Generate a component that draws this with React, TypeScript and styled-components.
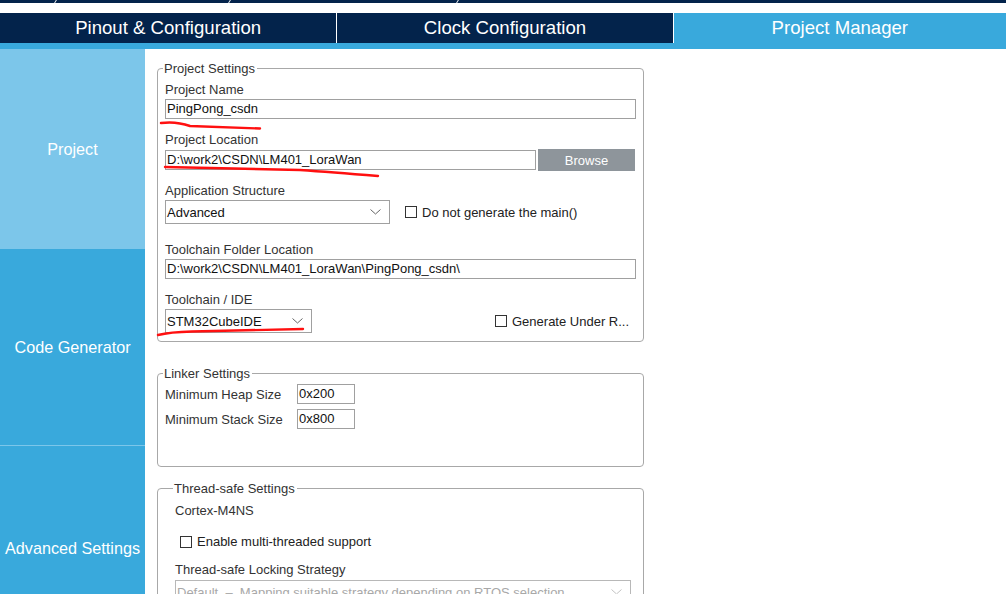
import styled, { createGlobalStyle } from 'styled-components';

const GlobalStyle = createGlobalStyle`
  html, body {
    margin: 0;
    padding: 0;
    background: #ffffff;
    overflow: hidden;
  }
  body {
    font-family: "Liberation Sans", Arial, sans-serif;
    color: #222;
  }
`;

const NAVY = '#03234b';
const BLUE = '#39a9dc';
const LIGHT = '#7cc6ea';

// 页面
const Page = styled.div`
  position: relative;
  width: 1006px;
  height: 594px;
  display: flex;
  flex-direction: column;
  overflow: hidden;
`;

// 顶部面包屑残留
const TopStrip = styled.div`
  flex-shrink: 0;
  height: 3px;
  background: ${NAVY};
  display: flex;
  padding-left: 55px;
`;

const Slash = styled.span<{ $w: number }>`
  width: ${p => p.$w}px;
  height: 3px;
  border-left: 1px solid #fff;
  transform: skewX(-30deg);
`;

// 标签栏
const TabBar = styled.div`
  flex-shrink: 0;
  margin-top: 10px;
  display: flex;
  height: 30px;
  background: ${NAVY};
`;

const Tab = styled.div<{ $active?: boolean; $w: number }>`
  width: ${p => p.$w}px;
  height: 30px;
  background: ${p => (p.$active ? BLUE : NAVY)};
  border-left: 1px solid #ffffff;
  color: #fff;
  font-size: 18.6px;
  display: flex;
  align-items: center;
  justify-content: center;
  line-height: 30px;
  &:first-child {
    border-left: none;
  }
`;

const TabStripe = styled.div`
  flex-shrink: 0;
  height: 6px;
  background: ${BLUE};
`;

const Body = styled.div`
  flex: 1;
  min-height: 0;
  display: flex;
`;

// 左侧导航
const Sidebar = styled.div`
  width: 145px;
  flex-shrink: 0;
  display: flex;
  flex-direction: column;
  background: ${BLUE};
`;

const SideItem = styled.div<{ $active?: boolean; $h: number; $line?: boolean }>`
  flex-shrink: 0;
  height: ${p => p.$h}px;
  background: ${p => (p.$active ? LIGHT : BLUE)};
  border-bottom: ${p => (p.$line ? `1px solid ${LIGHT}` : 'none')};
  color: #fff;
  font-size: 16.2px;
  display: flex;
  align-items: center;
  justify-content: center;
  white-space: nowrap;
`;

const Content = styled.div`
  padding: 12px 0 0 12px;
  display: flex;
  flex-direction: column;
`;

// 分组框
const Group = styled.fieldset<{ $gap?: number; $h?: number; $pl?: number }>`
  flex-shrink: 0;
  width: 487px;
  box-sizing: border-box;
  margin: ${p => p.$gap ?? 0}px 0 0 0;
  padding: 6px 8px 8px ${p => p.$pl ?? 7}px;
  border: 1px solid #a8a8a8;
  border-radius: 4px;
  min-width: 0;
  ${p => (p.$h ? `height: ${p.$h}px;` : '')}
`;

const Legend = styled.legend`
  font-size: 13px;
  line-height: 15px;
  color: #333;
  padding: 0 2px 0 1px;
  margin-left: -2px;
`;

const Label = styled.div<{ $top?: number }>`
  font-size: 13px;
  line-height: 15px;
  color: #333;
  margin-top: ${p => p.$top ?? 0}px;
  margin-bottom: 2px;
  white-space: nowrap;
`;

const Row = styled.div`
  display: flex;
  align-items: center;
`;

const TextInput = styled.div<{ $w: number }>`
  width: ${p => p.$w}px;
  height: 20px;
  box-sizing: border-box;
  border: 1px solid #a0a0a0;
  font-size: 13px;
  line-height: 18px;
  padding-left: 1px;
  color: #111;
  white-space: nowrap;
  overflow: hidden;
`;

const Browse = styled.div`
  margin-left: 2px;
  width: 97px;
  height: 22px;
  background: #8e959b;
  color: #fff;
  font-size: 13px;
  display: flex;
  align-items: center;
  justify-content: center;
`;

const Select = styled.div<{ $w: number; $disabled?: boolean }>`
  width: ${p => p.$w}px;
  height: 24px;
  box-sizing: border-box;
  border: 1px solid ${p => (p.$disabled ? '#b8b8b8' : '#a0a0a0')};
  font-size: 13px;
  color: ${p => (p.$disabled ? '#a8a8a8' : '#111')};
  display: flex;
  align-items: center;
  justify-content: space-between;
  padding: 0 8px 0 1px;
  white-space: pre;
  overflow: hidden;
`;

const Check = styled.label<{ $ml?: number; $mt?: number }>`
  margin-left: ${p => p.$ml ?? 0}px;
  margin-top: ${p => p.$mt ?? 0}px;
  display: flex;
  align-items: center;
  gap: 5px;
  font-size: 13px;
  color: #222;
  white-space: nowrap;
`;

const Box = styled.span`
  width: 12px;
  height: 12px;
  box-sizing: border-box;
  border: 1px solid #333;
  background: #fff;
`;

const Grid = styled.div`
  display: grid;
  grid-template-columns: 132px 58px;
  row-gap: 5px;
  align-items: center;
  margin-top: -3px;
`;

const Plain = styled.div<{ $top?: number }>`
  font-size: 13px;
  line-height: 15px;
  color: #333;
  margin-top: ${p => p.$top ?? 0}px;
  white-space: nowrap;
`;

const SelectWrap = styled.div`
  margin-top: 3px;
`;

// 红色手绘下划线（批注覆盖层）
const Marks = styled.svg`
  position: absolute;
  left: 0;
  top: 0;
  pointer-events: none;
`;

const Chevron = ({ light }: { light?: boolean }) => (
  <svg width="11" height="6" viewBox="0 0 11 6">
    <path d="M0.5 0.5 L5.5 5 L10.5 0.5" fill="none" stroke={light ? '#c4c4c4' : '#666'} strokeWidth="1" />
  </svg>
);

export default function App() {
  return (
    <Page>
      <GlobalStyle />
      <TopStrip>
        <Slash $w={173} />
        <Slash $w={227} />
        <Slash $w={10} />
      </TopStrip>

      <TabBar>
        <Tab $w={337}>Pinout &amp; Configuration</Tab>
        <Tab $w={336}>Clock Configuration</Tab>
        <Tab $w={333} $active>Project Manager</Tab>
      </TabBar>
      <TabStripe />

      <Body>
        <Sidebar>
          <SideItem $active $h={200}>Project</SideItem>
          <SideItem $h={196} $line>Code Generator</SideItem>
          <SideItem $h={204}>Advanced Settings</SideItem>
        </Sidebar>

        <Content>
          <Group $h={281}>
            <Legend>Project Settings</Legend>
            <Label>Project Name</Label>
            <TextInput $w={471}>PingPong_csdn</TextInput>

            <Label $top={13}>Project Location</Label>
            <Row>
              <TextInput $w={371}>D:\work2\CSDN\LM401_LoraWan</TextInput>
              <Browse>Browse</Browse>
            </Row>

            <Label $top={12}>Application Structure</Label>
            <Row>
              <Select $w={225}>
                Advanced
                <Chevron />
              </Select>
              <Check $ml={15}>
                <Box />
                Do not generate the main()
              </Check>
            </Row>

            <Label $top={18}>Toolchain Folder Location</Label>
            <TextInput $w={471}>D:\work2\CSDN\LM401_LoraWan\PingPong_csdn\</TextInput>

            <Label $top={13}>Toolchain / IDE</Label>
            <Row>
              <Select $w={147}>
                STM32CubeIDE
                <Chevron />
              </Select>
              <Check $ml={183}>
                <Box />
                Generate Under R...
              </Check>
            </Row>
          </Group>

          <Group $gap={24} $h={101}>
            <Legend>Linker Settings</Legend>
            <Grid>
              <Plain>Minimum Heap Size</Plain>
              <TextInput $w={58}>0x200</TextInput>
              <Plain>Minimum Stack Size</Plain>
              <TextInput $w={58}>0x800</TextInput>
            </Grid>
          </Group>

          <Group $gap={14} $pl={17} $h={140}>
            <Legend>Thread-safe Settings</Legend>
            <Plain $top={1}>Cortex-M4NS</Plain>
            <Check $ml={5} $mt={16}>
              <Box />
              Enable multi-threaded support
            </Check>
            <Plain $top={13}>Thread-safe Locking Strategy</Plain>
            <SelectWrap>
              <Select $w={456} $disabled>
                {'Default  –  Mapping suitable strategy depending on RTOS selection'}
                <Chevron light />
              </Select>
            </SelectWrap>
          </Group>
        </Content>
      </Body>

      <Marks width="1006" height="594" viewBox="0 0 1006 594">
        <g fill="none" stroke="#ff1010" strokeWidth="2.4" strokeLinecap="round" strokeLinejoin="round">
          <path d="M161 123 Q176 121 190 126 L260 128.5" />
          <path d="M165 167 L300 170 Q330 172 378 176" />
          <path d="M158 335 Q170 332 192 331.5 L303 329" />
        </g>
      </Marks>
    </Page>
  );
}
